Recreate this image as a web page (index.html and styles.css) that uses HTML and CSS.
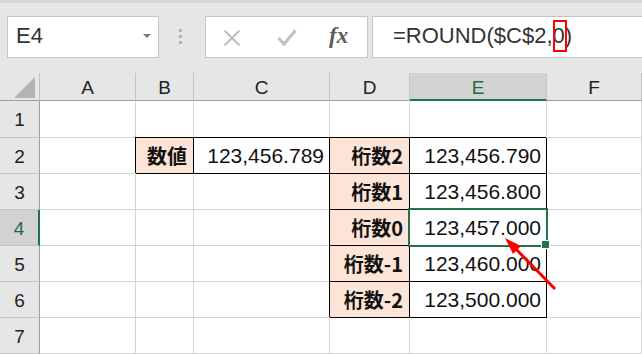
FILE: index.html
```html
<!DOCTYPE html>
<html lang="ja">
<head>
<meta charset="utf-8">
<title>ROUND</title>
<link rel="stylesheet" href="styles.css">
</head>
<body>
<div class="toolbar">
  <div class="namebox"><span class="ref">E4</span><span class="caret"></span></div>
  <div class="grip"><i></i><i></i><i></i></div>
  <div class="fxbtns">
    <svg class="ic ic-x" width="18" height="16" viewBox="0 0 18 16"><path d="M1.5 0.5 L16.5 15.5 M16.5 0.5 L1.5 15.5" stroke="#bdbdbd" stroke-width="2" fill="none"/></svg>
    <svg class="ic ic-ok" width="20" height="17" viewBox="0 0 20 17"><path d="M1.5 9 L7 15 L18.5 1.5" stroke="#c2c2c2" stroke-width="3.2" fill="none"/></svg>
    <span class="fx">fx</span>
  </div>
  <div class="formula">=ROUND($C$2,<span class="hl">0</span>)</div>
</div>
<div class="sheet">
  <div class="corner"></div>
  <div class="ch">A</div><div class="ch">B</div><div class="ch">C</div><div class="ch">D</div><div class="ch sel">E</div><div class="ch">F</div>

  <div class="rh">1</div>
  <div class="c"></div><div class="c"></div><div class="c"></div><div class="c"></div><div class="c"></div><div class="c"></div>

  <div class="rh">2</div>
  <div class="c"></div><div class="c b lab">数値</div><div class="c b">123,456.789</div><div class="c b lab">桁数2</div><div class="c b">123,456.790</div><div class="c"></div>

  <div class="rh">3</div>
  <div class="c"></div><div class="c"></div><div class="c"></div><div class="c b lab">桁数1</div><div class="c b">123,456.800</div><div class="c"></div>

  <div class="rh sel">4</div>
  <div class="c"></div><div class="c"></div><div class="c"></div><div class="c b lab">桁数0</div><div class="c b active">123,457.000</div><div class="c"></div>

  <div class="rh">5</div>
  <div class="c"></div><div class="c"></div><div class="c"></div><div class="c b lab">桁数-1</div><div class="c b">123,460.000</div><div class="c"></div>

  <div class="rh">6</div>
  <div class="c"></div><div class="c"></div><div class="c"></div><div class="c b lab">桁数-2</div><div class="c b">123,500.000</div><div class="c"></div>

  <div class="rh">7</div>
  <div class="c"></div><div class="c"></div><div class="c"></div><div class="c"></div><div class="c"></div><div class="c"></div>
</div>
<svg class="arrow" width="642" height="354" viewBox="0 0 642 354">
  <line x1="555" y1="289" x2="513" y2="246" stroke="#ff0000" stroke-width="3"/>
  <polygon points="505,238 521,246 513,254" fill="#ff0000"/>
</svg>
</body>
</html>
```

FILE: styles.css
```css
* { box-sizing: border-box; }

body {
  margin: 0;
  width: 642px;
  height: 354px;
  overflow: hidden;
  background: #fff;
  font-family: "Liberation Sans", Arial, sans-serif;
  position: relative;
}

.toolbar {
  height: 73px;
  background: #e6e6e6;
  border-top: 3px solid #d6d6d6;
  padding-top: 13px;
  display: flex;
  align-items: flex-start;
}

.namebox {
  margin-left: 7px;
  width: 152px;
  height: 42px;
  background: #fff;
  border: 1px solid #c6c6c6;
  padding-left: 8px;
  font-size: 22px;
  line-height: 37px;
  color: #333;
  position: relative;
}

.caret {
  position: absolute;
  left: 135px;
  top: 17px;
  width: 0;
  height: 0;
  border-left: 4px solid transparent;
  border-right: 4px solid transparent;
  border-top: 4px solid #7a7a7a;
}

.grip {
  margin-left: 20px;
  margin-right: 23px;
  margin-top: 13px;
  display: flex;
  flex-direction: column;
  gap: 3px;
}
.grip i {
  display: block;
  width: 3px;
  height: 3px;
  background: #b1b1b1;
}

.fxbtns {
  width: 163px;
  height: 42px;
  background: #fff;
  border: 1px solid #c6c6c6;
  position: relative;
}
.ic { position: absolute; }
.ic-x { left: 17px; top: 13px; }
.ic-ok { left: 71px; top: 12px; }
.fx {
  position: absolute;
  left: 123px;
  top: 6px;
  font-family: "Liberation Serif", serif;
  font-style: italic;
  font-weight: 700;
  font-size: 23px;
  color: #5c5c5c;
}

.formula {
  flex: 1;
  margin-left: 4px;
  margin-right: -4px;
  height: 42px;
  background: #fff;
  border: 1px solid #c6c6c6;
  padding-left: 20px;
  font-size: 22px;
  line-height: 37px;
  color: #333;
  white-space: nowrap;
}
.hl { position: relative; }
.hl::after {
  content: "";
  position: absolute;
  left: 0;
  right: -2px;
  top: -3px;
  bottom: -4px;
  border: 2px solid #f00;
}

.sheet {
  display: grid;
  grid-template-columns: 40px 96px 58px 136px 80px 137px 95px;
  grid-template-rows: 28px 37px repeat(6, 36px);
}

.corner {
  background: #e6e6e6;
  border-right: 1px solid #c0c0c0;
  border-bottom: 1px solid #9e9e9e;
  position: relative;
}
.corner::after {
  content: "";
  position: absolute;
  right: 4px;
  bottom: 2px;
  width: 21px;
  height: 21px;
  background: #b4b4b4;
  clip-path: polygon(100% 0, 100% 100%, 0 100%);
}

.ch {
  background: #e6e6e6;
  border-right: 1px solid #c3c3c3;
  border-bottom: 1px solid #9e9e9e;
  display: flex;
  align-items: center;
  justify-content: center;
  padding-top: 3px;
  font-size: 19px;
  color: #222;
}
.ch.sel {
  background: #d2d2d2;
  border-bottom: 2px solid #217346;
  color: #1e6b41;
}

.rh {
  background: #e6e6e6;
  border-right: 1px solid #9e9e9e;
  border-bottom: 1px solid #c3c3c3;
  display: flex;
  align-items: center;
  justify-content: center;
  padding-top: 2px;
  font-size: 19px;
  color: #222;
}
.rh.sel {
  background: #d2d2d2;
  border-right: 2px solid #217346;
  color: #1e6b41;
}

.c {
  border-right: 1px solid #d4d4d4;
  border-bottom: 1px solid #d4d4d4;
  display: flex;
  align-items: center;
  justify-content: flex-end;
  padding-right: 5px;
  font-size: 21px;
  color: #111;
  white-space: nowrap;
}
.c.b {
  border-right-color: #000;
  border-bottom-color: #000;
  box-shadow: -1px -1px 0 0 #000;
}
.lab {
  background: #fce4d6;
  font-family: "Noto Sans CJK JP", sans-serif;
  font-weight: 700;
  font-size: 20px;
  padding-right: 6px;
}

.active {
  position: relative;
  z-index: 1;
}
.active::before {
  content: "";
  position: absolute;
  left: -2px;
  top: -2px;
  right: -2px;
  bottom: -2px;
  border: 2px solid #217346;
}
.active::after {
  content: "";
  position: absolute;
  right: -4px;
  bottom: -4px;
  width: 7px;
  height: 7px;
  background: #217346;
  border: 1px solid #fff;
}

.arrow {
  position: absolute;
  left: 0;
  top: 0;
  pointer-events: none;
  z-index: 2;
}
```
